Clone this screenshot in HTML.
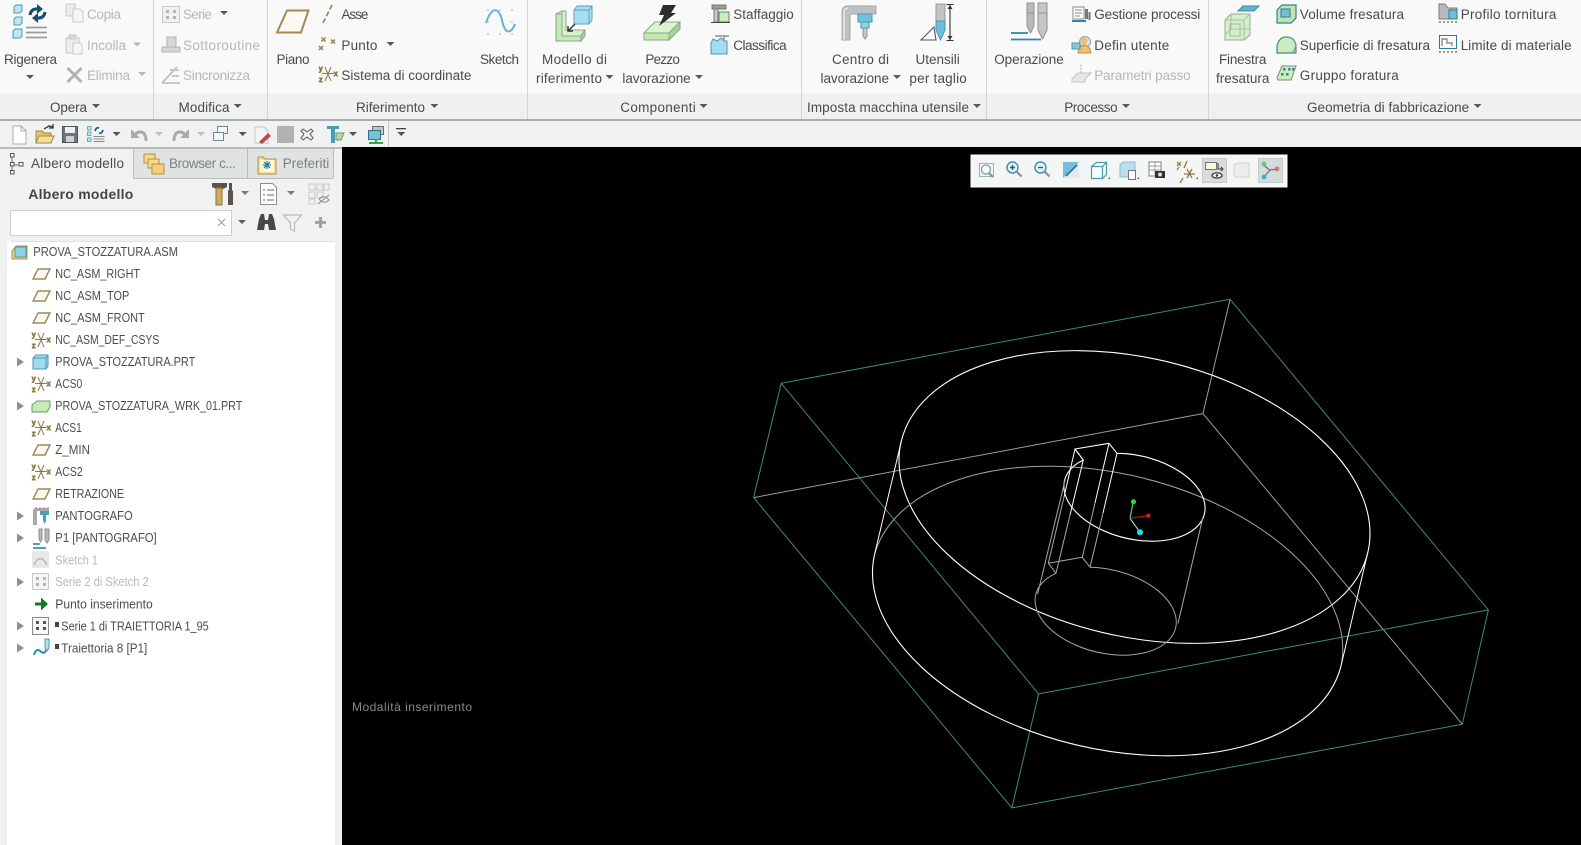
<!DOCTYPE html>
<html lang="it">
<head>
<meta charset="utf-8">
<title>Creo NC</title>
<style>
html,body{margin:0;padding:0;width:1581px;height:845px;overflow:hidden;background:#000}
svg{display:block}
text{font-family:"Liberation Sans",sans-serif;font-size:13.5px;fill:#4a4a4a}
.g{fill:#b5b7b7}
.s{font-size:12.5px;fill:#4c4c4c}
.sg{font-size:12.5px;fill:#b8baba}
.tab{fill:#7d7f7f}
</style>
</head>
<body>
<svg xmlns="http://www.w3.org/2000/svg" width="1581" height="845" viewBox="0 0 1581 845">
<defs>
<path id="tr" d="M-4-2H4L0 2Z"/>
<g id="plane"><path d="M5 1H17L12 11H0Z" fill="#fbf8ee" stroke="#9a8a5c" stroke-width="1.400"/></g>
<g id="csys" fill="none" stroke="#8d7a45" stroke-width="1">
<path d="M6 2L12 16M12 2L6 16M3 8.500H15"/>
<text x="0" y="6" style="font-size:7px;fill:#333">y</text><text x="0" y="17" style="font-size:7px;fill:#333">z</text><text x="15" y="11" style="font-size:7px;fill:#333">x</text>
</g>
<path id="exp" d="M0-4.500L7 0L0 4.500Z" fill="#8e9090"/>
</defs>

<!-- ribbon -->
<rect width="1581" height="93" fill="#f9f9f9"/>
<rect y="93" width="1581" height="26" fill="#eff1f1"/>
<rect y="119" width="1581" height="2" fill="#a9aeae"/>
<rect y="121" width="1581" height="26" fill="#f0f2f2"/>
<g stroke="#d3d6d6"><path d="M153.500 0V119M267.500 0V119M527.500 0V119M801.500 0V119M986.500 0V119M1208.500 0V119"/></g>

<!-- ribbon text -->
<text x="4" y="64" textLength="53">Rigenera</text>
<text class="g" x="87" y="19" textLength="34">Copia</text>
<text class="g" x="87" y="50" textLength="39">Incolla</text>
<text class="g" x="87" y="80" textLength="43">Elimina</text>
<text class="g" x="183" y="19" textLength="29">Serie</text>
<text class="g" x="183" y="50" textLength="77">Sottoroutine</text>
<text class="g" x="183" y="80" textLength="67">Sincronizza</text>
<text x="276.500" y="64" textLength="33">Piano</text>
<text x="341.400" y="19" textLength="27">Asse</text>
<text x="341.400" y="50" textLength="36">Punto</text>
<text x="341.400" y="80" textLength="130">Sistema di coordinate</text>
<text x="480" y="64" textLength="39">Sketch</text>
<text x="50" y="112" textLength="37">Opera</text>
<text x="178.500" y="112" textLength="51">Modifica</text>
<text x="356" y="112" textLength="69">Riferimento</text>
<text x="542" y="64" textLength="65">Modello di</text>
<text x="536" y="83" textLength="66">riferimento</text>
<text x="645.400" y="64" textLength="34.500">Pezzo</text>
<text x="622.400" y="83" textLength="68.300">lavorazione</text>
<text x="733.200" y="19" textLength="60.600">Staffaggio</text>
<text x="733.200" y="50" textLength="53.500">Classifica</text>
<text x="832" y="64" textLength="57">Centro di</text>
<text x="820.500" y="83" textLength="68.500">lavorazione</text>
<text x="915.500" y="64" textLength="44.300">Utensili</text>
<text x="909.400" y="83" textLength="57.400">per taglio</text>
<text x="994.200" y="64" textLength="69.600">Operazione</text>
<text x="620.300" y="112" textLength="75.400">Componenti</text>
<text x="807" y="112" textLength="162">Imposta macchina utensile</text>
<text x="1094.300" y="19" textLength="106">Gestione processi</text>
<text x="1094.300" y="50" textLength="75">Defin utente</text>
<text class="g" x="1094.300" y="80" textLength="96.300">Parametri passo</text>
<text x="1219" y="64" textLength="47.400">Finestra</text>
<text x="1216" y="83" textLength="53.400">fresatura</text>
<text x="1299.800" y="19" textLength="104.200">Volume fresatura</text>
<text x="1299.800" y="50" textLength="130.200">Superficie di fresatura</text>
<text x="1299.800" y="80" textLength="99">Gruppo foratura</text>
<text x="1460.700" y="19" textLength="95.700">Profilo tornitura</text>
<text x="1460.700" y="50" textLength="110.900">Limite di materiale</text>
<text x="1064.200" y="112" textLength="53.400">Processo</text>
<text x="1307" y="112" textLength="162.200">Geometria di fabbricazione</text>

<!-- drop arrows -->
<g fill="#585a5a">
<use href="#tr" x="30" y="77"/><use href="#tr" x="224" y="13"/><use href="#tr" x="390.500" y="44"/>
<use href="#tr" x="96" y="106"/><use href="#tr" x="237.700" y="106"/><use href="#tr" x="434.400" y="106"/>
<use href="#tr" x="609.500" y="77"/><use href="#tr" x="699" y="77"/><use href="#tr" x="897" y="77"/>
<use href="#tr" x="703.500" y="106"/><use href="#tr" x="977" y="106"/><use href="#tr" x="1126" y="106"/><use href="#tr" x="1477.600" y="106"/>
</g>
<g fill="#b4b6b6"><use href="#tr" x="137" y="44.500"/><use href="#tr" x="142" y="74"/></g>

<!-- Rigenera icon -->
<g fill="#bfe4f2" stroke="#4f9ab3" stroke-width="1">
<path d="M14 7l2-2h6v6l-2 2h-6zM14 19l2-2h6v6l-2 2h-6zM13 31l2-2h7v7l-2 2h-7z"/>
</g>
<g fill="none" stroke="#17506b" stroke-width="3">
<path d="M30 15Q31 8 39 9"/><path d="M45 12Q44 19 36 18"/>
</g>
<path d="M37 4l6 5-6 5zM38 13l-6 5 6 5z" fill="#17506b"/>
<path d="M26 27.500H47M26 32.500H47M26 37.500H47" stroke="#999c9c" stroke-width="1.800"/>

<!-- Copia / Incolla / Elimina -->
<g fill="#eceded" stroke="#c8caca"><path d="M66 4h9v12h-9z"/><path d="M73 9h7l3 3v10H73z" fill="#f6f6f6"/>
<path d="M66 38h13v15H66z"/><path d="M69 35h7v4h-7z" fill="#d6d8d8"/><path d="M73 43h7l2 2v9H73z" fill="#f6f6f6"/></g>
<path d="M67.500 68L81.500 82M81.500 68L67.500 82" stroke="#b0b2b2" stroke-width="3"/>

<!-- Serie / Sottoroutine / Sincronizza -->
<rect x="162.500" y="6.500" width="17" height="16" fill="#f0f1f1" stroke="#c8caca"/>
<g fill="#b3b5b5"><rect x="166" y="10" width="3" height="3"/><rect x="173" y="10" width="3" height="3"/><rect x="166" y="16" width="3" height="3"/><rect x="173" y="16" width="3" height="3"/></g>
<g fill="#d5d7d7" stroke="#b2b4b4"><path d="M167 37h9v12h-9z"/><path d="M162 47h18v5h-18z"/></g>
<path d="M162 83L177 67M162 83H180M170 70h9M172 76h7" stroke="#bfc1c1" stroke-width="1.800" fill="none"/>

<!-- Piano, Asse, Punto, Csys, Sketch -->
<path d="M287 10.500H308.500L301 32.500H277Z" fill="#fbf9f1" stroke="#a08c55" stroke-width="2"/>
<path d="M332 5L323 23" stroke="#8c7a44" stroke-width="1.500" stroke-dasharray="5 2.500"/>
<g stroke="#94824f" stroke-width="1.500"><path d="M321.500 37.500l4 4M325.500 37.500l-4 4M331 39.500l4 4M335 39.500l-4 4M319 46l4 4M323 46l-4 4"/></g>
<use href="#csys" x="319" y="65"/>
<g fill="#c5c9c9"><circle cx="488" cy="10" r="1"/><circle cx="500" cy="10" r="1"/><circle cx="512" cy="10" r="1"/><circle cx="488" cy="22" r="1"/><circle cx="512" cy="22" r="1"/><circle cx="488" cy="34" r="1"/><circle cx="500" cy="34" r="1"/><circle cx="512" cy="34" r="1"/></g>
<path d="M486 23C492 5 499 8 502 20C505 35 511 34 515 24" fill="none" stroke="#62b5cc" stroke-width="2"/>

<!-- Modello di riferimento -->
<path d="M556 14l6-3v27l-6 3z" fill="#e3f3d8" stroke="#8aaa8c"/>
<path d="M556 14h6v22h22l-4 5H556z" fill="#c6e9b8" stroke="#86a888"/>
<path d="M562 11h4v19h19v3l-1 3h-22z" fill="#d9f0cc" stroke="#8aaa8c"/>
<path d="M585 30v6l-4 5v-6z" fill="#a8cca0" stroke="#86a888"/>
<path d="M574 10l3-4h15v14l-3 4h-15z" fill="#a6dff3" stroke="#5fa3bb"/>
<path d="M574 10h15v14M589 10l3-4" fill="none" stroke="#5fa3bb"/>
<path d="M575 24l-7 7M568 26v5h5" fill="none" stroke="#333" stroke-width="1.400"/>

<!-- Pezzo lavorazione -->
<path d="M644 33l11-11h25l-11 11z" fill="#def3d2" stroke="#86a888"/>
<path d="M644 33h25v7h-25z" fill="#c3e8b3" stroke="#86a888"/>
<path d="M669 33l11-11v7l-11 11z" fill="#a9d09b" stroke="#86a888"/>
<path d="M663 5h13l-5 8h5l-17 13 5-11h-5z" fill="#2d2f2f"/>

<!-- Staffaggio / Classifica -->
<path d="M712 5h14v4h-14z" fill="#999b9b" stroke="#777"/>
<path d="M714 9h4v13h-4z" fill="#c8caca" stroke="#777"/>
<path d="M719 12h10v10h-10z" fill="#cdeac0" stroke="#5c8d62"/>
<path d="M711 22.500h19" stroke="#444"/>
<path d="M711 43l2-4 4 2 4-3 3 3h3v13h-16z" fill="#a5dcf0" stroke="#4f95ae"/>
<path d="M715 36h14M724 36v5" stroke="#8c8f8f" stroke-width="1.400"/>

<!-- Centro di lavorazione -->
<path d="M842 40V12q0-6 6-6h28v8h-24q-2 0-2 2v24z" fill="#bfc1c1" stroke="#a5a7a7"/>
<path d="M844 40V12q0-4 4-4" fill="none" stroke="#e8e9e9" stroke-width="1.500"/>
<path d="M858 14h14v8h-14z" fill="#6fc3dd" stroke="#4d97ae"/>
<path d="M861 22h8v6h-8z" fill="#8fd2e6" stroke="#4d97ae"/>
<path d="M863 28h4v8l-2 3-2-3z" fill="#c8caca" stroke="#8d8f8f"/>

<!-- Utensili -->
<path d="M921 40l13-13 2 13z" fill="#fafafa" stroke="#555" stroke-width="1.100"/>
<path d="M936 4h9v25h-9z" fill="#c3c5c5" stroke="#999"/>
<path d="M936 21h9v9l-4.500 10-4.500-10z" fill="#6ac0dc" stroke="#4d97ae"/>
<path d="M950 5v35M946.500 4.500h7M946.500 40.500h7" stroke="#333" stroke-width="1.100"/>
<path d="M947.500 9l2.500-4 2.500 4zM947.500 36l2.500 4 2.500-4z" fill="#333"/>

<!-- Operazione -->
<path d="M1027 3h7v23l-3.500 7-3.500-7z" fill="#b9bbbb" stroke="#909292"/>
<path d="M1038 3h9v27l-4.500 9-4.500-9z" fill="#c6c8c8" stroke="#909292"/>
<path d="M1027 13h7M1038 13h9" stroke="#909292"/>
<path d="M1011 33H1028M1011 39.500H1041" stroke="#2a87ab" stroke-width="1.800"/>

<!-- Gestione / Defin / Parametri -->
<path d="M1073 7h11v12h-11z" fill="#fff" stroke="#888"/>
<path d="M1075 10h7M1075 13h7M1075 16h5" stroke="#888"/>
<path d="M1085 9h3v10h-3zM1088.500 12h2v8h-2z" fill="#777"/>
<path d="M1072 21h14" stroke="#2a87ab" stroke-width="2"/>
<circle cx="1085" cy="42" r="5.500" fill="#dfe3e8" stroke="#8aa0b8"/>
<path d="M1078 53q1-7 6-8 6 1 7 8z" fill="#e9c071" stroke="#b89249"/>
<circle cx="1084" cy="41" r="3.500" fill="#e9c071"/>
<path d="M1072 43h8v6h-8z" fill="#86c6df" stroke="#4d97ae"/>
<path d="M1072 79l6-6h13l-6 6v3h-13z" fill="#e6e7e7" stroke="#c3c5c5"/>
<path d="M1081 65v9" stroke="#c3c5c5" stroke-dasharray="2 1" stroke-width="1.400"/>

<!-- Finestra -->
<path d="M1238 11l5-5h16l-5 5z" fill="#59b5d2" stroke="#3d8ea8"/>
<path d="M1225 20l6-6h19v21l-6 5h-19z" fill="#d6efc9" stroke="#8fb091"/>
<path d="M1225 20h19v20M1244 20l6-6M1231 14v15h19M1231 29l-6 6" fill="none" stroke="#a5c0a5"/>
<path d="M1230 24h10v12h-10z" fill="none" stroke="#a3b5a3"/>

<!-- Volume / Superficie / Gruppo -->
<path d="M1277 10l5-5h14v13l-5 5h-14z" fill="#bfe3b2" stroke="#35808f" stroke-width="1.200"/>
<path d="M1281 9h9v8h-9z" fill="#6cc0dc" stroke="#2f7b93"/>
<path d="M1277 53V46q2-9 9-9 9 0 10 9v7z" fill="#cdebbe" stroke="#4c8d6b" stroke-width="1.200"/>
<path d="M1286 37q9 0 10 9l-3 7" fill="none" stroke="#4aa1bd" stroke-width="1.200"/>
<path d="M1277 78l5-12h14l-5 14h-13z" fill="#cbeebb" stroke="#6f9670"/>
<g fill="#3f7f97"><rect x="1283" y="68" width="2.500" height="2.500"/><rect x="1288" y="68" width="2.500" height="2.500"/><rect x="1292" y="68" width="2.500" height="2.500"/><rect x="1281" y="73" width="2.500" height="2.500"/><rect x="1286" y="73" width="2.500" height="2.500"/></g>

<!-- Profilo / Limite -->
<path d="M1439 4h6l3 4h9v11h-18z" fill="#b9bbbb" stroke="#777"/>
<path d="M1449 10h8v9h-8z" fill="#6cc0dc" stroke="#2f7b93"/>
<path d="M1439 22h18" stroke="#333" stroke-dasharray="2 2"/>
<rect x="1439.500" y="35.500" width="17" height="13" fill="#fafafa" stroke="#2f7b93"/>
<path d="M1442 46v-7h5v4h5v3" fill="none" stroke="#8a8c8c" stroke-width="1.400"/>
<path d="M1439 52h18" stroke="#333" stroke-dasharray="2 2"/>

<!-- quick access toolbar -->
<path d="M13 126h8l5 5v13H13z" fill="#fff" stroke="#a9abab"/><path d="M21 126v5h5" fill="none" stroke="#a9abab"/>
<path d="M36 143v-12h6l2 2h7v10z" fill="#e9c56f" stroke="#a4853f"/><path d="M36 143l3-7h15l-3 7z" fill="#f6de9e" stroke="#a4853f"/>
<path d="M44 129l5-3 4 1M53 124v4h-4" fill="none" stroke="#333" stroke-width="1.300"/>
<path d="M62.500 126.500h15v16h-15z" fill="#6a7680" stroke="#4c565e"/><path d="M65 127h10v6H65z" fill="#eef0f0"/><path d="M66 136h8v6h-8z" fill="#cfd2d2"/>
<g fill="#c0e6f3" stroke="#4f9ab3" stroke-width=".8"><rect x="87.500" y="126.500" width="3.500" height="3.500"/><rect x="87.500" y="132" width="3.500" height="3.500"/><rect x="87.500" y="138" width="3.500" height="3.500"/></g>
<path d="M95 131q1-4 4-3M103 130q-1 4-4 3" fill="none" stroke="#17506b" stroke-width="1.600"/>
<path d="M93.500 136.500h11M93.500 139h11M93.500 141.500h11" stroke="#888b8b"/>
<g fill="#525454"><use href="#tr" x="116.600" y="134"/><use href="#tr" x="242.700" y="134"/><use href="#tr" x="353" y="134"/><use href="#tr" x="401.300" y="134"/></g>
<rect x="396" y="128" width="10" height="1.300" fill="#444"/>
<g fill="#bcbebe"><use href="#tr" x="159" y="134"/><use href="#tr" x="201" y="134"/></g>
<path d="M146 141q0-9-6-9-3 0-5 3" fill="none" stroke="#a9abab" stroke-width="3"/><path d="M131 129v9h9z" fill="#a9abab"/>
<path d="M174 141q0-9 6-9 3 0 5 3" fill="none" stroke="#a9abab" stroke-width="3"/><path d="M189 129v9h-9z" fill="#a9abab"/>
<g fill="#f3f4f4" stroke="#6a8a96"><rect x="217.500" y="126.500" width="10" height="7"/><rect x="213.500" y="132.500" width="10" height="8"/></g>
<path d="M255 127h9l4 4v12h-13z" fill="#f4f4f4" stroke="#c3c5c5"/><path d="M259 142l9-9 3 3-9 8z" fill="#bd4a4a"/>
<rect x="277" y="126" width="17" height="17" fill="#b1b3b3"/>
<path d="M303 129l4 3 4-3 2 2-3 3 3 4-2 2-4-3-4 3-2-2 3-4-3-3z" fill="#f2f3f3" stroke="#55595b"/>
<path d="M327 126h12v3h-4v14h-4V129h-4z" fill="#4b9bb8"/><path d="M336 133h8l-3 7h-5z" fill="#b6d8a9" stroke="#6f9670"/>
<rect x="372.500" y="126.500" width="11" height="8" fill="#c4c6c6" stroke="#6d7070"/>
<rect x="368.500" y="130.500" width="12" height="9" fill="#79bfd8" stroke="#31708a"/>
<path d="M369 143h14M376 139v4" stroke="#3aa53a" stroke-width="2"/>
<path d="M388.500 121V147" stroke="#c6c9c9"/>

<!-- left panel -->
<rect y="147" width="342" height="698" fill="#f0f2f2"/>
<rect y="147" width="342" height="2" fill="#b7baba"/>
<rect x="133" y="149" width="200" height="29" fill="#dfe3e3"/>
<path d="M133.500 149V178M247.500 149V178M333.500 149V178M133 178.500H333" stroke="#b9bcbc" fill="none"/>
<rect x="7" y="241" width="328" height="604" fill="#fff"/>
<path d="M11 241.500H335" stroke="#dfe2e2"/>

<path d="M12 154v16M12 165h6" stroke="#666" fill="none"/>
<g fill="#fff" stroke="#555" stroke-width="1"><rect x="10.500" y="153.500" width="3.500" height="3.500"/><rect x="10.500" y="162.500" width="3.500" height="3.500"/><rect x="10.500" y="170.500" width="3.500" height="3.500"/><rect x="19" y="162.500" width="4" height="3.500"/></g>
<text x="31" y="168" textLength="93">Albero modello</text>
<text class="tab" x="169" y="168" textLength="67">Browser c...</text>
<text class="tab" x="282.700" y="168" textLength="46.600">Preferiti</text>
<g fill="#f5d98f" stroke="#b4913f"><path d="M144 154h11v9h-11z"/><path d="M148 159h11v9h-11z"/><path d="M152 164h12v10h-12z" fill="#f4cf77"/></g>
<path d="M258 157h5l2 2h11v15h-18z" fill="#f6dc96" stroke="#b4913f"/><path d="M260 160h14v12h-14z" fill="#fff6d8"/>
<path d="M267 161v8M263 165h8M264 162l6 6M270 162l-6 6" stroke="#2a82a5" stroke-width="1.300"/>

<text x="28.300" y="199" textLength="105" style="font-weight:bold;font-size:14px;fill:#444">Albero modello</text>
<path d="M212 183h15v4l-4 2h-7l-4-2z" fill="#5d5148"/><path d="M216 188h6v17h-6z" fill="#cfa960" stroke="#8f7235"/>
<path d="M229 183h3v7l1 1v14h-5V191l1-1z" fill="#5d5148"/>
<use href="#tr" x="245" y="193" fill="#7a7c7c"/>
<path d="M260.500 183.500h12l4 4v17h-16z" fill="#fff" stroke="#8c8f8f"/>
<path d="M263 190h2M263 195h2M263 200h2M267 190h7M267 195h7M267 200h7" stroke="#666"/>
<use href="#tr" x="291" y="193" fill="#7a7c7c"/>
<g fill="none" stroke="#c9cbcb"><rect x="309" y="184" width="6" height="6"/><rect x="317" y="184" width="6" height="6"/><rect x="324" y="184" width="5" height="6"/><rect x="309" y="192" width="6" height="6"/><rect x="317" y="192" width="6" height="6"/><rect x="309" y="199" width="6" height="5"/></g>
<path d="M318 204l11-9M319 199q5-5 10 1-5 5-10-1" fill="none" stroke="#8f9292" stroke-width="1.100"/>
<rect x="10.500" y="210.500" width="221" height="25" fill="#fff" stroke="#cdd0d0"/>
<path d="M218 219l7 7M225 219l-7 7" stroke="#9c9e9e" stroke-width="1.100"/>
<use href="#tr" x="242" y="222" fill="#5e6060"/>
<path d="M257 230l2-11 2-5h3l1 6h3l1-6h3l2 5 2 11h-7l-1-6h-3l-1 6z" fill="#4a4846"/>
<path d="M283.500 215h18l-7 8v8l-4-2v-6z" fill="#f1f2f2" stroke="#b8baba" stroke-width="1.200"/>
<path d="M320.500 217v11M315 222.500h11" stroke="#9b9d9d" stroke-width="2.800"/>

<!-- tree -->
<path d="M16 246h11v13H12v-8z" fill="#f0cd7c" stroke="#b4913f"/><path d="M15 247h11v10H15z" fill="#8fd2ec" stroke="#4d97ae"/>
<text class="s" x="33.300" y="256" textLength="144.700" lengthAdjust="spacingAndGlyphs">PROVA_STOZZATURA.ASM</text>
<use href="#plane" x="33" y="268"/><text class="s" x="55.300" y="278" textLength="84.700" lengthAdjust="spacingAndGlyphs">NC_ASM_RIGHT</text>
<use href="#plane" x="33" y="290"/><text class="s" x="55.300" y="300" textLength="74" lengthAdjust="spacingAndGlyphs">NC_ASM_TOP</text>
<use href="#plane" x="33" y="312"/><text class="s" x="55.300" y="322" textLength="89.400" lengthAdjust="spacingAndGlyphs">NC_ASM_FRONT</text>
<use href="#csys" x="32" y="331"/><text class="s" x="55.300" y="344" textLength="104" lengthAdjust="spacingAndGlyphs">NC_ASM_DEF_CSYS</text>
<use href="#exp" x="17" y="362"/><path d="M33 358l3-3h12v11l-2 3H33z" fill="#9edbf1" stroke="#4d97ae"/><path d="M33 358h13v11M46 358l2-3" fill="none" stroke="#4d97ae"/>
<text class="s" x="55.300" y="366" textLength="140" lengthAdjust="spacingAndGlyphs">PROVA_STOZZATURA.PRT</text>
<use href="#csys" x="32" y="375"/><text class="s" x="55.300" y="388" textLength="27" lengthAdjust="spacingAndGlyphs">ACS0</text>
<use href="#exp" x="17" y="406"/><path d="M32 405l5-4h13v6l-3 5H32z" fill="#c6ecb5" stroke="#6f9670"/>
<text class="s" x="55.300" y="410" textLength="187" lengthAdjust="spacingAndGlyphs">PROVA_STOZZATURA_WRK_01.PRT</text>
<use href="#csys" x="32" y="419"/><text class="s" x="55.300" y="432" textLength="26.400" lengthAdjust="spacingAndGlyphs">ACS1</text>
<use href="#plane" x="33" y="444"/><text class="s" x="55.300" y="454" textLength="34.700" lengthAdjust="spacingAndGlyphs">Z_MIN</text>
<use href="#csys" x="32" y="463"/><text class="s" x="55.300" y="476" textLength="27.400" lengthAdjust="spacingAndGlyphs">ACS2</text>
<use href="#plane" x="33" y="488"/><text class="s" x="55.300" y="498" textLength="68.700" lengthAdjust="spacingAndGlyphs">RETRAZIONE</text>
<use href="#exp" x="17" y="516"/><path d="M33 525v-14q0-3 3-3h13v3H37v14z" fill="#a9abab"/><path d="M40 511h9v4h-9zM43 515h3v6l-1 3-2-3z" fill="#4d9cb8"/><path d="M36 507v2M40 507v2M44 507v2M48 507v2" stroke="#888"/>
<text class="s" x="55.300" y="520" textLength="77.400" lengthAdjust="spacingAndGlyphs">PANTOGRAFO</text>
<use href="#exp" x="17" y="538"/><path d="M39 529h3v10l-1.500 3-1.500-3zM45 529h4v11l-2 3-2-3z" fill="#b7b9b9" stroke="#8c8f8f"/><path d="M33 544h7M33 548h13" stroke="#1f7fa5" stroke-width="1.600"/>
<text class="s" x="55.300" y="542" textLength="101.400" lengthAdjust="spacingAndGlyphs">P1 [PANTOGRAFO]</text>
<rect x="32" y="551" width="17" height="17" fill="#e7e8e8"/><path d="M34 565q6-13 13 0" fill="none" stroke="#b5b7b7" stroke-width="1.400"/>
<text class="sg" x="55.300" y="564.500" textLength="42.700" lengthAdjust="spacingAndGlyphs">Sketch 1</text>
<use href="#exp" x="17" y="582"/><rect x="32.500" y="573.500" width="16" height="16" fill="#f4f5f5" stroke="#c7c9c9"/>
<g fill="#b5b7b7"><rect x="36" y="577" width="3" height="3"/><rect x="43" y="577" width="3" height="3"/><rect x="36" y="583" width="3" height="3"/><rect x="43" y="583" width="3" height="3"/></g>
<text class="sg" x="55.300" y="586" textLength="93.400" lengthAdjust="spacingAndGlyphs">Serie 2 di Sketch 2</text>
<path d="M35 602.500h6v-5l7 6.500-7 6.500v-5h-6z" fill="#0d7a24"/>
<text class="s" x="55.300" y="608.500" textLength="97.400" lengthAdjust="spacingAndGlyphs">Punto inserimento</text>
<use href="#exp" x="17" y="626"/><rect x="32.500" y="617.500" width="16" height="17" fill="#f8f9f9" stroke="#8a8c8c"/>
<g fill="#555"><rect x="36" y="621" width="3" height="3"/><rect x="43" y="621" width="3" height="3"/><rect x="36" y="627" width="3" height="3"/><rect x="43" y="627" width="3" height="3"/></g>
<rect x="55" y="622" width="4" height="5" fill="#444"/>
<text class="s" x="61.300" y="630.500" textLength="147.400" lengthAdjust="spacingAndGlyphs">Serie 1 di TRAIETTORIA 1_95</text>
<use href="#exp" x="17" y="648"/><path d="M34 655q2-7 6-4t5 1 2-3" fill="none" stroke="#1f7fa5" stroke-width="1.800"/><path d="M45 639h4v9l-2 3-2-3z" fill="#b7dcea" stroke="#4d97ae"/>
<rect x="55" y="644" width="4" height="5" fill="#444"/>
<text class="s" x="61.300" y="652.500" textLength="86" lengthAdjust="spacingAndGlyphs">Traiettoria 8 [P1]</text>

<!-- graphics area label -->
<text x="352" y="711" textLength="120" style="font-size:12px;fill:#8a8a8a">Modalità inserimento</text>

<!-- wireframe -->
<g fill="none" stroke-linejoin="round">
<path d="M753.600 497.600L1202.900 413.600L1230.100 299.300M1202.900 413.600L1462.300 724.200" stroke="#9a9f9e" stroke-width="1"/>
<path d="M781.200 383.300L1230.100 299.300L1488.400 609.900L1038.600 693.900ZM781.200 383.300L753.600 497.600L1011.900 807.900L1462.300 724.200L1488.400 609.900M1038.600 693.900L1011.900 807.900" stroke="#3d8c6d" stroke-width="1"/>
<ellipse cx="1134.500" cy="497" rx="239.800" ry="139.200" transform="rotate(13.400 1134.500 497)" stroke="#fff" stroke-width="1.100"/>
<path d="M874.400 555.200A239.800 139.200 13.400 0 1 1340.800 666.800" stroke="#a3a3a3" stroke-width="1"/>
<path d="M874.400 555.200A239.800 139.200 13.400 0 0 1340.800 666.800" stroke="#fff" stroke-width="1.100"/>
<path d="M901.300 441.200L874.400 555.200M1367.700 552.800L1340.800 666.800" stroke="#fff" stroke-width="1"/>
<path d="M1117 453.300A71.900 41.800 13.400 1 1 1083.300 460L1075 449L1109 443.300L1117 453.300" stroke="#fff" stroke-width="1.100"/>
<path d="M1109 443.300L1095 503M1117 453.300L1103 513M1083.300 460L1070 515M1075 449L1064 497" stroke="#fff" stroke-width="1"/>
<path d="M1095 503L1082.300 557.300M1103 513L1090 567.300M1070 515L1056 573.300M1064 497L1048.300 563.300M1202.700 518.300L1178 623.500M1065 480.300L1037.600 594.300" stroke="#a8a8a8" stroke-width="1"/>
<path d="M1048.300 563.300L1082.300 557.300L1090 567.300M1048.300 563.300L1056 573.300" stroke="#a8a8a8" stroke-width="1"/>
<path d="M1090 567.300A71.900 41.800 13.400 1 1 1056 573.300" stroke="#a3a3a3" stroke-width="1"/>
</g>
<path d="M1130 518.300L1133.300 501.700" stroke="#5ad06a" stroke-width="1.200"/>
<path d="M1130 518.300L1148.300 515.700" stroke="#c01818" stroke-width="1.200"/>
<path d="M1130 518.300L1140 532.300" stroke="#9ad8c8" stroke-width="1.200"/>
<circle cx="1133.500" cy="501.700" r="2.500" fill="#1fe040"/>
<circle cx="1148.300" cy="515.700" r="2.200" fill="#e01818"/>
<circle cx="1140" cy="532.300" r="3" fill="#20e0f0"/>

<!-- view toolbar -->
<rect x="971" y="155" width="316" height="32" fill="#f4f5f5" stroke="#fff"/>
<rect x="1202.500" y="158.500" width="24" height="24" fill="#d9dbdb" stroke="#c8caca"/>
<rect x="1258.500" y="158.500" width="24" height="24" fill="#d3dcdc" stroke="#c5cccc"/>
<rect x="979.500" y="163.500" width="14" height="13" fill="#eef4f6" stroke="#9ab3bd"/>
<circle cx="986" cy="169.500" r="4.500" fill="#fff" stroke="#6fa3b5" stroke-width="1.300"/><path d="M989 173l4 4" stroke="#8d8f8f" stroke-width="2"/>
<circle cx="1012.500" cy="167.500" r="5.500" fill="#e6f4f9" stroke="#3f8eaa" stroke-width="1.400"/><path d="M1010 167.500h5M1012.500 165v5" stroke="#1f5f78" stroke-width="1.400"/><path d="M1016.500 171.500l5 5" stroke="#8d8f8f" stroke-width="2.200"/>
<circle cx="1040.500" cy="167.500" r="5.500" fill="#e6f4f9" stroke="#3f8eaa" stroke-width="1.400"/><path d="M1038 167.500h5" stroke="#1f5f78" stroke-width="1.400"/><path d="M1044.500 171.500l5 5" stroke="#8d8f8f" stroke-width="2.200"/>
<rect x="1063" y="162" width="16" height="16" fill="#6fc0da"/><path d="M1063 178l16-16v16z" fill="#dcecf2"/><path d="M1066 176l11-11" stroke="#2f5f73" stroke-width="1.500"/>
<path d="M1091.500 166.500l5-4h10v12l-4 4h-11zM1091.500 166.500h11v12M1102.500 166.500l4-4" fill="#f8fbfc" stroke="#4a9ab5" stroke-width="1.200"/>
<path d="M1108 179l2-2v2z" fill="#444"/>
<path d="M1120 165l3-3h12v15h-15z" fill="#b9e0ee" stroke="#8fbccc"/><rect x="1128.500" y="170.500" width="7" height="9" fill="#fff" stroke="#777"/><path d="M1137 179l2-2v2z" fill="#444"/>
<rect x="1149" y="162" width="12" height="14" fill="#fff" stroke="#7d7f7f"/><path d="M1149 166h12M1149 170h12M1155 162v14" stroke="#9a9c9c"/><rect x="1155" y="171" width="10" height="7" fill="#333"/><circle cx="1160" cy="174.500" r="2" fill="#ddd"/>
<path d="M1177 163l4 4M1181 163l-4 4M1177 171l2-3M1187 162l-3 7M1183 179l-3 5M1187 170l5 9M1192 170l-5 9M1184 175h11" stroke="#8d7a45" stroke-width="1.300" transform="translate(0,-1)"/>
<path d="M1196 179l2-2v2z" fill="#444"/>
<rect x="1205.500" y="162.500" width="11" height="7" fill="#fbf6df" stroke="#777"/><path d="M1218 163v6h4M1221 167l2 2-2 2" fill="none" stroke="#333"/><ellipse cx="1217" cy="175.500" rx="5" ry="2.600" fill="#fff" stroke="#333" stroke-width="1.300"/><circle cx="1217" cy="175.500" r="1.300" fill="#333"/>
<path d="M1234 165l4-2h11v14h-13l-2-2z" fill="#ebecec" stroke="#d0d2d2"/>
<path d="M1263 165l7 5 7-1M1270 170l-6 7" fill="none" stroke="#6e7070" stroke-width="1.200"/><circle cx="1264" cy="164" r="2.400" fill="#76bf7f"/><circle cx="1277" cy="169" r="2.400" fill="#cf7a7a"/><circle cx="1264" cy="177" r="2.400" fill="#4fa8c4"/>
</svg>
</body>
</html>
